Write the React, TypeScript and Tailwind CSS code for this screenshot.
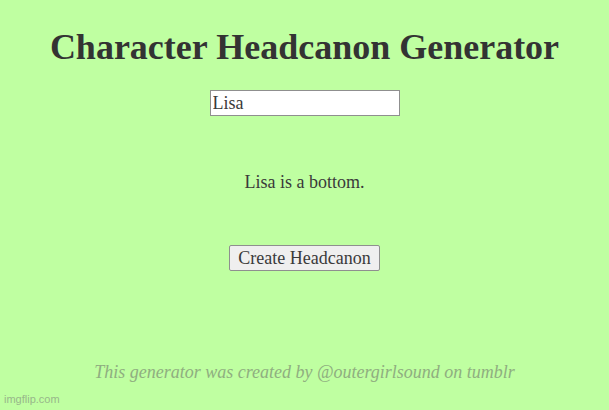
import React, { useState } from "react";

const results = ["Lisa is a bottom."];

export default function App() {
  const [name, setName] = useState("Lisa");
  const [headcanon, setHeadcanon] = useState(results[0]);

  return (
    <div className="relative flex h-[410px] w-full flex-col items-center bg-[#bfffa1] font-['Liberation_Serif',serif] text-[#333]">
      <h1 className="mt-[27px] text-[36px] font-bold leading-[40px] text-[#333]">
        Character Headcanon Generator
      </h1>

      <input
        value={name}
        onChange={(e) => setName(e.target.value)}
        className="mt-[23px] h-[26px] w-[190px] border border-[#8f8f8f] bg-white px-[2px] text-[18px] text-[#3a3a3a] outline-none"
      />

      <p className="mt-[55px] text-[18px] leading-[22px] text-[#3a3a3a]">{headcanon}</p>

      <button
        onClick={() => setHeadcanon(`${name} is a bottom.`)}
        className="mt-[52px] h-[26px] rounded-[2px] border border-[#8f8f8f] bg-[#efefef] px-[8px] text-[18px] leading-[22px] text-[#3a3a3a]"
      >
        Create Headcanon
      </button>

      <p className="mt-[90px] text-[18px] italic leading-[22px] text-[#8fae80]">
        This generator was created by @outergirlsound on tumblr
      </p>

      <span className="absolute bottom-[3px] left-[4px] font-['Liberation_Sans',sans-serif] text-[11px] text-[#98b78a]">
        imgflip.com
      </span>
    </div>
  );
}
